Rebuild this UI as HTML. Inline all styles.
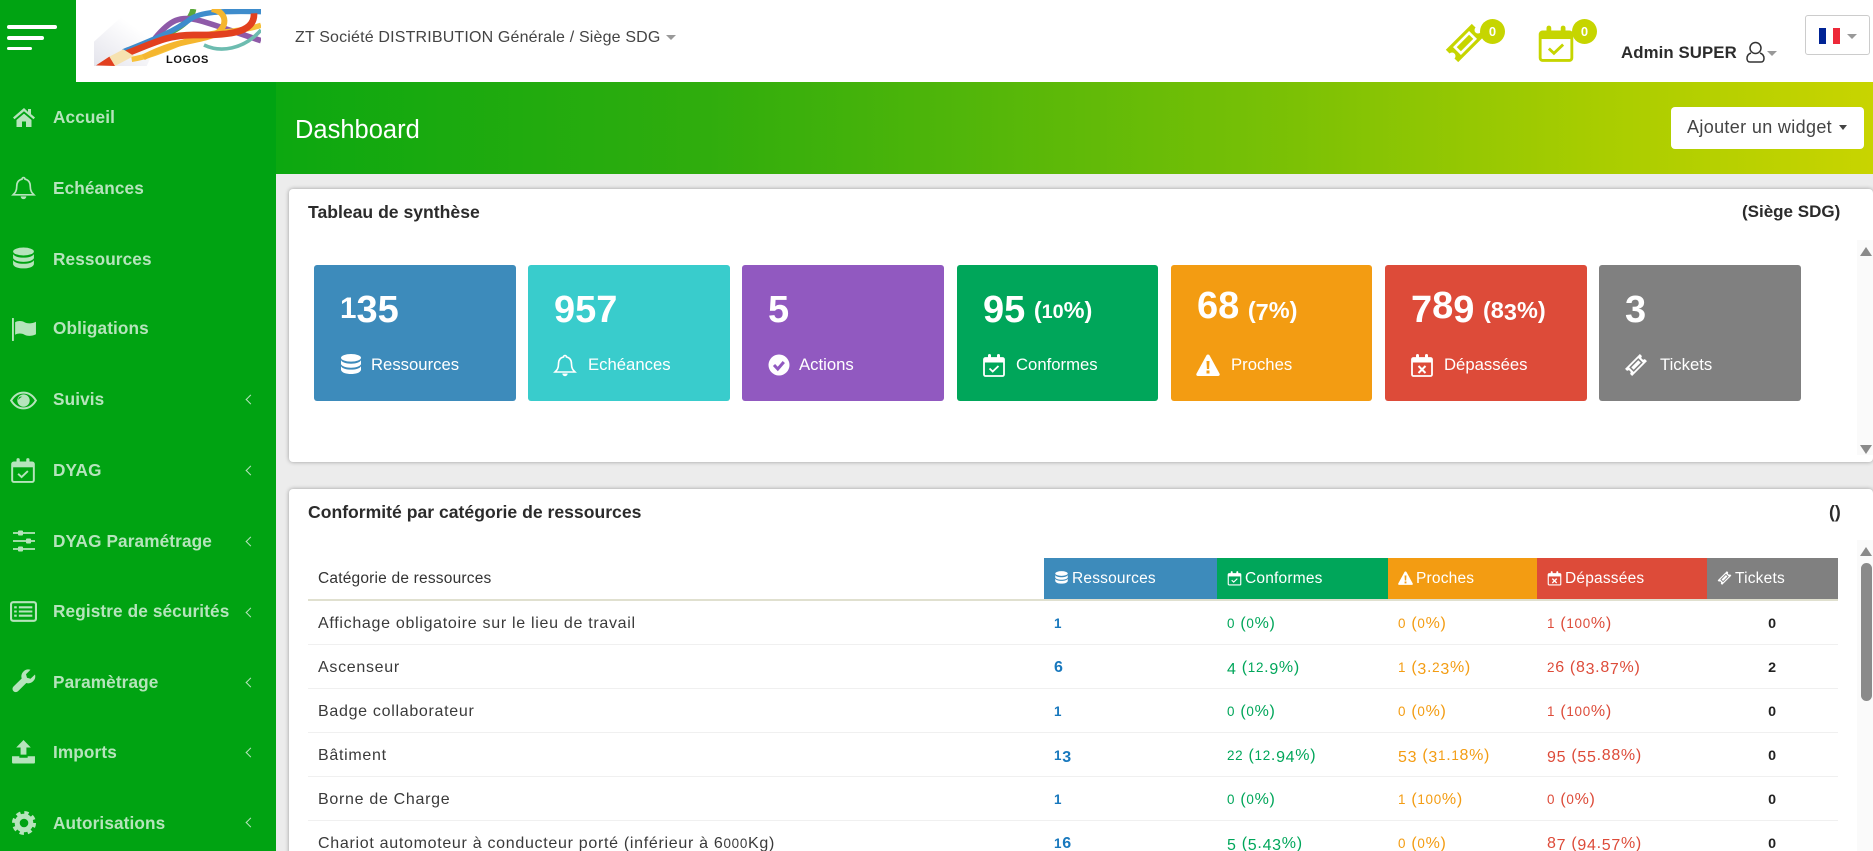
<!DOCTYPE html>
<html lang="fr"><head><meta charset="utf-8"><title>Dashboard</title>
<style>
*{box-sizing:border-box}
html,body{margin:0;padding:0;width:1873px;height:851px;overflow:hidden;background:#ececec;font-family:"Liberation Sans",sans-serif;color:#333}
#p{position:absolute;left:0;top:0;width:1873px;height:851px;overflow:hidden;background:#ececec}
.a{position:absolute;white-space:nowrap}
svg{display:block;overflow:visible}
svg.ic{position:absolute;fill:currentColor}
#side{position:absolute;left:0;top:82px;width:276px;height:769px;background:#00a312;color:#b6e4bc}
#side .t{position:absolute;left:53px;font-size:17.2px;letter-spacing:.12px;font-weight:bold;line-height:20px;white-space:nowrap}
#side .c{position:absolute;left:247px;width:7px;height:7px;border-left:1.6px solid #b6e4bc;border-bottom:1.6px solid #b6e4bc;transform:rotate(45deg);margin-top:1px}
.panel{position:absolute;left:289px;width:1584px;background:#fff;border-radius:4px;box-shadow:0 0 4px rgba(0,0,0,.35)}
.h{position:absolute;font-size:17.6px;font-weight:bold;color:#2b2b2b;white-space:nowrap;line-height:20px}
.card{position:absolute;top:265px;height:136px;border-radius:3px;color:#fff}
.card .n{position:absolute;left:26px;top:21px;font-size:38px;font-weight:bold;line-height:40px;white-space:nowrap}
.card .n small{font-size:23.5px;margin-left:-2px}
.card .n i.d{top:.1em}
.card .l{position:absolute;top:90px;font-size:16.7px;line-height:20px;white-space:nowrap}
.card svg{left:25px;top:88px;width:24px;height:24px}
i{font-style:normal}
i.o{font-size:84%}
i.d{position:relative;top:.17em}
table{position:absolute;left:308px;top:558px;width:1530px;border-collapse:collapse;table-layout:fixed;font-size:16px;letter-spacing:.7px;color:#3a3a3a}
th{height:42px;padding:0 0 0 10px;text-align:left;font-weight:normal;color:#fff;font-size:15.5px;letter-spacing:.2px;border-bottom:2px solid #e0e0cf;white-space:nowrap;position:relative}
th:first-child{color:#333}
th svg{display:inline-block;width:15px;height:16px;fill:#fff;vertical-align:-3px;margin-right:3px}
td{height:44px;padding:3px 0 0 10px;border-bottom:1px solid #f0f0f0;white-space:nowrap}
.b1{color:#1878bd;font-weight:bold}.b2{color:#00a65a}.b3{color:#f39c12}.b4{color:#dd4b39}
.b5{color:#222;font-weight:bold;text-align:center;padding:2px 0 0;font-size:17px}
.tr{position:absolute;width:0;height:0;border-left:8px solid transparent;border-right:8px solid transparent}
</style></head><body><div id="p">
<svg width="0" height="0" style="position:absolute"><defs>
<symbol id="home" viewBox="0 0 24 24"><path d="M12 3 1 12.5l1.5 1.8L12 6.3l9.5 8 1.5-1.8-4-3.4V4h-3v2.9zM4.5 15 12 8.6l7.5 6.4v7h-5.5v-5.5h-4V22H4.5z"/></symbol>
<symbol id="bell" viewBox="0 0 24 24"><path d="M12 2.5a1.5 1.5 0 0 1 1.5 1.5c3.5.7 5 3.5 5 7 0 5 2 6.5 3.5 8H2c1.5-1.5 3.5-3 3.5-8 0-3.5 1.5-6.3 5-7A1.5 1.5 0 0 1 12 2.5z" fill="none" stroke="currentColor" stroke-width="1.6"/><path d="M9.3 20.5a2.7 2.7 0 0 0 5.4 0z"/></symbol>
<symbol id="db" viewBox="0 0 24 24"><ellipse cx="12" cy="4.8" rx="10" ry="3.8"/><path d="M2 7.3c1.5 2.5 5.5 3.4 10 3.4s8.5-.9 10-3.4v4c-1.5 2.5-5.5 3.4-10 3.4S3.5 13.8 2 11.3z"/><path d="M2 13.2c1.5 2.5 5.5 3.4 10 3.4s8.5-.9 10-3.4v3.8c-1 3-5.5 4-10 4s-9-1-10-4z"/></symbol>
<symbol id="flag" viewBox="0 0 24 24"><rect x="0" y="1" width="1.8" height="22"/><path d="M3 5c3-1.5 6-1.5 9 0s7 1.5 11-.5v12c-4 2-8 2-11 .5s-6-1.5-9 0z"/></symbol>
<symbol id="eye" viewBox="0 0 24 24"><path d="M1 12C4 7 8 5 12 5s8 2 11 7c-3 5-7 7-11 7S4 17 1 12z" fill="none" stroke="currentColor" stroke-width="1.8"/><path fill-rule="evenodd" d="M12 6.5a5.5 5.5 0 1 1 0 11 5.5 5.5 0 0 1 0-11zM9 8.5a3 3 0 0 0-1.5 3c1-1.5 2-2.3 3.5-2.8z"/></symbol>
<symbol id="cal" viewBox="0 0 24 24"><path d="M3.5 5h17a1.5 1.5 0 0 1 1.5 1.5v15a1.5 1.5 0 0 1-1.5 1.5h-17A1.5 1.5 0 0 1 2 21.5v-15A1.5 1.5 0 0 1 3.5 5z" fill="none" stroke="currentColor" stroke-width="1.8"/><rect x="2" y="5" width="20" height="4.5"/><rect x="6" y="1" width="3" height="6.5" rx="1.5"/><rect x="15" y="1" width="3" height="6.5" rx="1.5"/><path d="M7.5 15.5l3.2 3 5.8-5.5" fill="none" stroke="currentColor" stroke-width="1.8"/></symbol>
<symbol id="calx" viewBox="0 0 24 24"><path d="M3.5 5h17a1.5 1.5 0 0 1 1.5 1.5v15a1.5 1.5 0 0 1-1.5 1.5h-17A1.5 1.5 0 0 1 2 21.5v-15A1.5 1.5 0 0 1 3.5 5z" fill="none" stroke="currentColor" stroke-width="1.8"/><rect x="2" y="5" width="20" height="4.5"/><rect x="6" y="1" width="3" height="6.5" rx="1.5"/><rect x="15" y="1" width="3" height="6.5" rx="1.5"/><path d="M8.5 13l7 7M15.5 13l-7 7" fill="none" stroke="currentColor" stroke-width="2"/></symbol>
<symbol id="sli" viewBox="0 0 24 24"><path d="M1 4h22M1 12h22M1 20h22" stroke="currentColor" stroke-width="1.8" fill="none"/><rect x="6" y="1.5" width="5" height="5" rx="1"/><rect x="14" y="9.5" width="5" height="5" rx="1"/><rect x="6" y="17.5" width="5" height="5" rx="1"/></symbol>
<symbol id="list" viewBox="0 0 26 24"><rect x="1" y="3" width="24" height="18" rx="2" fill="none" stroke="currentColor" stroke-width="2"/><path d="M8.5 8h13M8.5 12h13M8.5 16h13M4 8h2.5M4 12h2.5M4 16h2.5" stroke="currentColor" stroke-width="2" fill="none"/></symbol>
<symbol id="wr" viewBox="0 0 24 24"><path d="M23 5.500l-4.500 4.300-3.500-1-1-3.500L18.500.8A7 7 0 0 0 9.700 9.500L1.500 17.500a3.200 3.200 0 0 0 4.500 4.700l8.300-8.200a7 7 0 0 0 8.700-8.500z"/></symbol>
<symbol id="up" viewBox="0 0 24 24"><path d="M12 1l7 7.200h-4.200V15H9.200V8.200H5z"/><path d="M1 16.500h7V18h8v-1.500h7v6a1 1 0 0 1-1 1H2a1 1 0 0 1-1-1z"/></symbol>
<symbol id="gear" viewBox="0 0 24 24"><circle cx="12" cy="12" r="6.800" fill="none" stroke="currentColor" stroke-width="5"/><circle cx="12" cy="12" r="10.300" fill="none" stroke="currentColor" stroke-width="3.400" stroke-dasharray="4.300 3.790"/></symbol>
<symbol id="warn" viewBox="0 0 24 24"><path fill-rule="evenodd" d="M12 1.500c.8 0 1.300.4 1.700 1.100l9.800 18c.6 1.200 0 2.400-1.500 2.400H2c-1.500 0-2.100-1.200-1.500-2.400l9.800-18c.4-.7.900-1.100 1.700-1.100zM10.500 8l.4 8h2.200l.4-8zM10.500 17.500v3h3v-3z"/></symbol>
<symbol id="tick" viewBox="0 0 24 24"><g transform="rotate(-45 12 12)"><path fill-rule="evenodd" d="M1.500 7H22.500V10a2 2 0 0 0 0 4V17H1.500V14a2 2 0 0 0 0-4zM5.500 8.800H18.500V15.200H5.500zM7 10.300V13.700H17V10.300z"/></g></symbol>
</defs></svg>

<!-- header -->
<div class="a" style="left:0;top:0;width:1873px;height:82px;background:#fff"></div>
<div class="a" style="left:0;top:0;width:76px;height:82px;background:#00a312"></div>
<div class="a" style="left:7px;top:25px;width:50px;height:4px;background:#fff;border-radius:2px"></div>
<div class="a" style="left:7px;top:36px;width:37px;height:4px;background:#fff;border-radius:2px"></div>
<div class="a" style="left:7px;top:47px;width:25px;height:3px;background:#fff;border-radius:2px"></div>

<svg class="a" style="left:80px;top:0" width="200" height="85" viewBox="0 0 600 255">
<defs><linearGradient id="lg" x1="0" y1="1" x2="1" y2="0"><stop offset="0" stop-color="#e4e4ec"/><stop offset=".6" stop-color="#fff"/></linearGradient><clipPath id="lc"><rect x="42" y="27" width="501" height="173"/></clipPath></defs>
<polygon points="42,198 42,125 150,27 280,27 200,198" fill="url(#lg)"/>
<g fill="none" clip-path="url(#lc)">
<path d="M340 27C335 60 300 85 240 112" stroke="#5aa83a" stroke-width="18"/>
<path d="M225 115C270 60 300 45 360 62S460 95 543 122" stroke="#8e5aa8" stroke-width="17"/>
<path d="M372 135C420 158 490 150 543 90" stroke="#6dbcb0" stroke-width="11"/>
<path d="M130 155C230 115 290 90 330 58 360 36 420 32 543 35" stroke="#3e8ccc" stroke-width="16"/>
<path d="M155 178C240 165 320 112 400 100 460 92 500 90 543 76" stroke="#f6c13a" stroke-width="16"/>
<path d="M395 27C445 35 445 85 400 105 350 125 290 120 190 172" stroke="#f5b62e" stroke-width="18"/>
<path d="M128 165C220 130 260 105 340 105 430 105 525 105 522 40" stroke="#e2401f" stroke-width="20"/>
</g>
<polygon points="88,170 130,148 162,168 105,198" fill="#f6e2b0"/>
<polygon points="48,196 88,170 105,198" fill="#e2401f"/>
<text x="258" y="189" font-family="Liberation Sans" font-weight="bold" font-size="33" letter-spacing="2" fill="#111">LOGOS</text>
</svg>

<div class="a" style="left:295px;top:28px;font-size:16px;line-height:20px;color:#444;letter-spacing:.17px">ZT Société DISTRIBUTION Générale / Siège SDG</div>
<div class="tr" style="left:666px;top:35px;border-left-width:5px;border-right-width:5px;border-top:5px solid #999"></div>

<!-- ticket + badge -->
<svg class="ic" style="left:1444px;top:22px;width:42px;height:42px;color:#c6d500"><use href="#tick"/></svg>
<div class="a" style="left:1480px;top:19px;width:25px;height:25px;border-radius:50%;background:#c6d500;color:#fff;font-size:13px;font-weight:bold;text-align:center;line-height:25px">0</div>
<svg class="ic" style="left:1537px;top:24px;width:38px;height:38px;color:#c6d500"><use href="#cal"/></svg>
<div class="a" style="left:1572px;top:19px;width:25px;height:25px;border-radius:50%;background:#c6d500;color:#fff;font-size:13px;font-weight:bold;text-align:center;line-height:25px">0</div>
<div class="a" style="left:1621px;top:43px;font-size:16.8px;font-weight:bold;line-height:20px;color:#2c2c2c;letter-spacing:.1px">Admin SUPER</div>
<svg class="a" style="left:1746px;top:41px" width="19" height="22" viewBox="0 0 19 22" fill="none" stroke="#333" stroke-width="1.5"><circle cx="9.5" cy="7" r="5.5"/><path d="M5 12c-3 1-4 3-4 5.5 0 2 1 3.5 3 3.5h11c2 0 3-1.5 3-3.5 0-2.5-1-4.5-4-5.5"/></svg>
<div class="tr" style="left:1767px;top:51px;border-left-width:5px;border-right-width:5px;border-top:5px solid #999"></div>
<div class="a" style="left:1805px;top:15px;width:65px;height:40px;border:1px solid #ccc;border-radius:3px;background:#fff"></div>
<div class="a" style="left:1819px;top:28px;width:7px;height:16px;background:#002395"></div>
<div class="a" style="left:1826px;top:28px;width:7px;height:16px;background:#fff"></div>
<div class="a" style="left:1833px;top:28px;width:7px;height:16px;background:#ed2939"></div>
<div class="tr" style="left:1847px;top:34px;border-left-width:5px;border-right-width:5px;border-top:5px solid #999"></div>

<!-- banner -->
<div class="a" style="left:276px;top:82px;width:1597px;height:92px;background:linear-gradient(to right,#0ca810 0,#30ad0d 27%,#7cc105 64%,#a9cd00 83%,#c8d400 100%)"></div>
<div class="a" style="left:295px;top:114px;font-size:25.5px;line-height:32px;color:#fff">Dashboard</div>
<div class="a" style="left:1671px;top:107px;width:193px;height:42px;background:#fff;border-radius:4px"></div>
<div class="a" style="left:1687px;top:116px;font-size:18px;line-height:22px;color:#444;letter-spacing:.35px">Ajouter un widget</div>
<div class="tr" style="left:1839px;top:125px;border-left-width:4.5px;border-right-width:4.5px;border-top:5px solid #444"></div>

<!-- sidebar -->
<div id="side">
<svg class="ic" style="left:12px;top:23px;width:24px;height:24px"><use href="#home"/></svg><div class="t" style="top:25px">Accueil</div>
<svg class="ic" style="left:11px;top:93px;width:25px;height:25px"><use href="#bell"/></svg><div class="t" style="top:96px">Echéances</div>
<svg class="ic" style="left:11px;top:164px;width:25px;height:26px"><use href="#db"/></svg><div class="t" style="top:167px">Ressources</div>
<svg class="ic" style="left:12px;top:235px;width:25px;height:25px"><use href="#flag"/></svg><div class="t" style="top:236px">Obligations</div>
<svg class="ic" style="left:10px;top:305px;width:27px;height:27px"><use href="#eye"/></svg><div class="t" style="top:307px">Suivis</div><div class="c" style="top:313px"></div>
<svg class="ic" style="left:10px;top:375px;width:26px;height:26px"><use href="#cal"/></svg><div class="t" style="top:378px">DYAG</div><div class="c" style="top:384px"></div>
<svg class="ic" style="left:12px;top:447px;width:24px;height:24px"><use href="#sli"/></svg><div class="t" style="top:449px">DYAG Paramétrage</div><div class="c" style="top:455px"></div>
<svg class="ic" style="left:10px;top:517px;width:27px;height:25px"><use href="#list"/></svg><div class="t" style="top:519px">Registre de sécurités</div><div class="c" style="top:526px"></div>
<svg class="ic" style="left:12px;top:587px;width:24px;height:24px"><use href="#wr"/></svg><div class="t" style="top:590px">Paramètrage</div><div class="c" style="top:596px"></div>
<svg class="ic" style="left:11px;top:657px;width:25px;height:25px"><use href="#up"/></svg><div class="t" style="top:660px">Imports</div><div class="c" style="top:666px"></div>
<svg class="ic" style="left:12px;top:729px;width:24px;height:24px"><use href="#gear"/></svg><div class="t" style="top:731px">Autorisations</div><div class="c" style="top:736px"></div>
</div>

<!-- panel 1 -->
<div class="panel" style="top:189px;height:273px"></div>
<div class="h" style="left:308px;top:202px">Tableau de synthèse</div>
<div class="h" style="left:1742px;top:202px;font-size:17px">(Siège SDG)</div>

<div class="card" style="left:314px;width:202px;background:#3d8bbb"><div class="n"><i style="font-size:78%">1</i><i class="d">35</i></div><svg class="ic"><use href="#db"/></svg><div class="l" style="left:57px">Ressources</div></div>
<div class="card" style="left:528px;width:202px;background:#39cccc"><div class="n"><i class="d">957</i></div><svg class="ic"><use href="#bell"/></svg><div class="l" style="left:60px">Echéances</div></div>
<div class="card" style="left:742px;width:202px;background:#9159c0"><div class="n"><i class="d">5</i></div><svg class="ic" style="fill:#fff"><circle cx="12" cy="12" r="10.5"/><path d="M7 12l3.8 4 6-7" fill="none" stroke="#9159c0" stroke-width="3"/></svg><div class="l" style="left:57px">Actions</div></div>
<div class="card" style="left:957px;width:201px;background:#00a65a"><div class="n"><i class="d">95</i> <small>(<i class="o">10</i>%)</small></div><svg class="ic"><use href="#cal"/></svg><div class="l" style="left:59px">Conformes</div></div>
<div class="card" style="left:1171px;width:201px;background:#f39c12"><div class="n">68 <small>(<i class="d">7</i>%)</small></div><svg class="ic"><use href="#warn"/></svg><div class="l" style="left:60px">Proches</div></div>
<div class="card" style="left:1385px;width:202px;background:#dd4b39"><div class="n"><i class="d">7</i>8<i class="d">9</i> <small>(8<i class="d">3</i>%)</small></div><svg class="ic"><use href="#calx"/></svg><div class="l" style="left:59px">Dépassées</div></div>
<div class="card" style="left:1599px;width:202px;background:#808080"><div class="n"><i class="d">3</i></div><svg class="ic"><use href="#tick"/></svg><div class="l" style="left:61px">Tickets</div></div>

<div class="a" style="left:1857px;top:240px;width:16px;height:215px;background:#fafafa"></div>
<div class="tr" style="left:1860px;top:247px;border-bottom:9px solid #8a8a8a;border-left-width:6.5px;border-right-width:6.5px"></div>
<div class="tr" style="left:1860px;top:445px;border-top:9px solid #8a8a8a;border-left-width:6.5px;border-right-width:6.5px"></div>

<!-- panel 2 -->
<div class="panel" style="top:489px;height:380px"></div>
<div class="h" style="left:308px;top:502px">Conformité par catégorie de ressources</div>
<div class="h" style="left:1829px;top:502px">()</div>

<table>
<colgroup><col style="width:736px"><col style="width:173px"><col style="width:171px"><col style="width:149px"><col style="width:170px"><col style="width:131px"></colgroup>
<thead><tr>
<th>Catégorie de ressources</th>
<th style="background:#3d8bbb"><svg><use href="#db"/></svg>Ressources</th>
<th style="background:#00a65a"><svg><use href="#cal"/></svg>Conformes</th>
<th style="background:#f39c12"><svg><use href="#warn"/></svg>Proches</th>
<th style="background:#dd4b39"><svg><use href="#calx"/></svg>Dépassées</th>
<th style="background:#808080"><svg><use href="#tick"/></svg>Tickets</th>
</tr></thead>
<tbody>
<tr><td>Affichage obligatoire sur le lieu de travail</td><td class="b1"><i class="o">1</i></td><td class="b2"><i class="o">0</i> (<i class="o">0</i>%)</td><td class="b3"><i class="o">0</i> (<i class="o">0</i>%)</td><td class="b4"><i class="o">1</i> (<i class="o">100</i>%)</td><td class="b5"><i class="o">0</i></td></tr>
<tr><td>Ascenseur</td><td class="b1">6</td><td class="b2"><i class="d">4</i> (<i class="o">12</i>.<i class="d">9</i>%)</td><td class="b3"><i class="o">1</i> (<i class="d">3</i>.<i class="o">2</i><i class="d">3</i>%)</td><td class="b4"><i class="o">2</i>6 (8<i class="d">3</i>.8<i class="d">7</i>%)</td><td class="b5"><i class="o">2</i></td></tr>
<tr><td>Badge collaborateur</td><td class="b1"><i class="o">1</i></td><td class="b2"><i class="o">0</i> (<i class="o">0</i>%)</td><td class="b3"><i class="o">0</i> (<i class="o">0</i>%)</td><td class="b4"><i class="o">1</i> (<i class="o">100</i>%)</td><td class="b5"><i class="o">0</i></td></tr>
<tr><td>Bâtiment</td><td class="b1"><i class="o">1</i><i class="d">3</i></td><td class="b2"><i class="o">22</i> (<i class="o">12</i>.<i class="d">94</i>%)</td><td class="b3"><i class="d">53</i> (<i class="d">3</i><i class="o">1</i>.<i class="o">1</i>8%)</td><td class="b4"><i class="d">95</i> (<i class="d">55</i>.88%)</td><td class="b5"><i class="o">0</i></td></tr>
<tr><td>Borne de Charge</td><td class="b1"><i class="o">1</i></td><td class="b2"><i class="o">0</i> (<i class="o">0</i>%)</td><td class="b3"><i class="o">1</i> (<i class="o">100</i>%)</td><td class="b4"><i class="o">0</i> (<i class="o">0</i>%)</td><td class="b5"><i class="o">0</i></td></tr>
<tr><td>Chariot automoteur à conducteur porté (inférieur à 6<i class="o">000</i>Kg)</td><td class="b1"><i class="o">1</i>6</td><td class="b2"><i class="d">5</i> (<i class="d">5</i>.<i class="d">43</i>%)</td><td class="b3"><i class="o">0</i> (<i class="o">0</i>%)</td><td class="b4">8<i class="d">7</i> (<i class="d">94</i>.<i class="d">57</i>%)</td><td class="b5"><i class="o">0</i></td></tr>
</tbody></table>

<div class="a" style="left:1857px;top:540px;width:16px;height:311px;background:#fafafa"></div>
<div class="tr" style="left:1860px;top:547px;border-bottom:9px solid #8a8a8a;border-left-width:6.5px;border-right-width:6.5px"></div>
<div class="a" style="left:1861px;top:563px;width:11px;height:138px;background:#8a8a8a;border-radius:6px"></div>
</div></body></html>
